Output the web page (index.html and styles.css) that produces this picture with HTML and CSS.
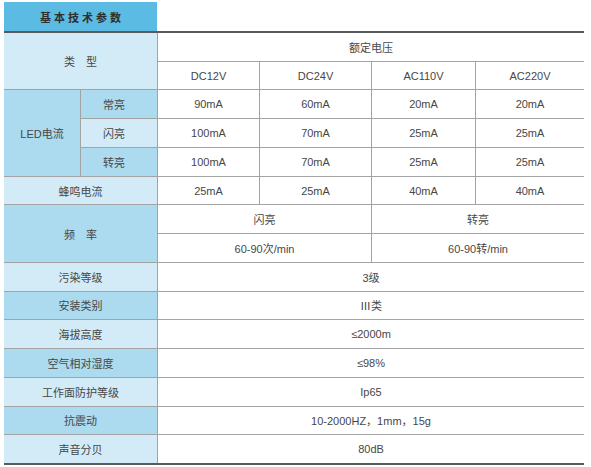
FILE: index.html
```html
<!DOCTYPE html>
<html lang="zh">
<head>
<meta charset="utf-8">
<link rel="stylesheet" href="styles.css">
</head>
<body>
<div class="wrap">
  <div class="title">基本技术参数</div>
  <div class="grid">
    <div class="c lab light r1-2 c1-3">类&emsp;型</div>
    <div class="c val c3-7">额定电压</div>
    <div class="c val">DC12V</div>
    <div class="c val">DC24V</div>
    <div class="c val">AC110V</div>
    <div class="c val">AC220V</div>

    <div class="c lab mid r3-6">LED电流</div>
    <div class="c lab mid sub">常亮</div>
    <div class="c val">90mA</div>
    <div class="c val">60mA</div>
    <div class="c val">20mA</div>
    <div class="c val">20mA</div>
    <div class="c lab light sub">闪亮</div>
    <div class="c val">100mA</div>
    <div class="c val">70mA</div>
    <div class="c val">25mA</div>
    <div class="c val">25mA</div>
    <div class="c lab mid sub">转亮</div>
    <div class="c val">100mA</div>
    <div class="c val">70mA</div>
    <div class="c val">25mA</div>
    <div class="c val">25mA</div>

    <div class="c lab light c1-3">蜂鸣电流</div>
    <div class="c val">25mA</div>
    <div class="c val">25mA</div>
    <div class="c val">40mA</div>
    <div class="c val">40mA</div>

    <div class="c lab mid c1-3 r7-9">频&emsp;率</div>
    <div class="c val c3-5">闪亮</div>
    <div class="c val c5-7">转亮</div>
    <div class="c val c3-5">60-90次/min</div>
    <div class="c val c5-7">60-90转/min</div>

    <div class="c lab light c1-3">污染等级</div>
    <div class="c val c3-7">3级</div>
    <div class="c lab mid c1-3">安装类别</div>
    <div class="c val c3-7">Ⅲ类</div>
    <div class="c lab light c1-3">海拔高度</div>
    <div class="c val c3-7">≤2000m</div>
    <div class="c lab mid c1-3">空气相对湿度</div>
    <div class="c val c3-7">≤98%</div>
    <div class="c lab light c1-3">工作面防护等级</div>
    <div class="c val c3-7">Ip65</div>
    <div class="c lab mid c1-3">抗震动</div>
    <div class="c val c3-7">10-2000HZ，1mm，15g</div>
    <div class="c lab light c1-3">声音分贝</div>
    <div class="c val c3-7">80dB</div>
  </div>
</div>
</body>
</html>
```

FILE: styles.css
```css
html, body {
  margin: 0;
  padding: 0;
  background: #ffffff;
}
body {
  font-family: "Liberation Sans", "Noto Sans CJK SC", sans-serif;
  font-size: 11px;
  color: #474747;
}
.wrap {
  padding: 2px 0 0 4px;
  width: 580px;
}
.title {
  width: 153px;
  height: 29px;
  background: #5bbbe2;
  color: #2e2e2e;
  font-family: "Noto Sans CJK SC", sans-serif;
  font-size: 11px;
  font-weight: 700;
  letter-spacing: 3px;
  display: flex;
  align-items: center;
  justify-content: center;
  padding-left: 3px;
  box-sizing: border-box;
}
.grid {
  display: grid;
  grid-template-columns: 76px 76px 101px 111px 103px 108px;
  grid-template-rows: repeat(15, 1fr);
  gap: 1px;
  height: 430px;
  background: #a3a3a3;
  border-top: 2px solid #5a5a5a;
  border-bottom: 2px solid #5a5a5a;
}
.c {
  display: flex;
  align-items: center;
  justify-content: center;
  background: #ffffff;
  white-space: nowrap;
}
.lab {
  font-family: "Noto Sans CJK SC", sans-serif;
}
.light { background: #d3ebf7; }
.mid { background: #acdaee; }
.sub { padding-right: 10px; }
.lab.r3-6 { font-family: "Liberation Sans", "Noto Sans CJK SC", sans-serif; }
.r1-2 { grid-row: 1 / 3; }
.r3-6 { grid-row: 3 / 6; }
.r7-9 { grid-row: 7 / 9; }
.c1-3 { grid-column: 1 / 3; }
.c3-7 { grid-column: 3 / 7; }
.c3-5 { grid-column: 3 / 5; }
.c5-7 { grid-column: 5 / 7; }
```
